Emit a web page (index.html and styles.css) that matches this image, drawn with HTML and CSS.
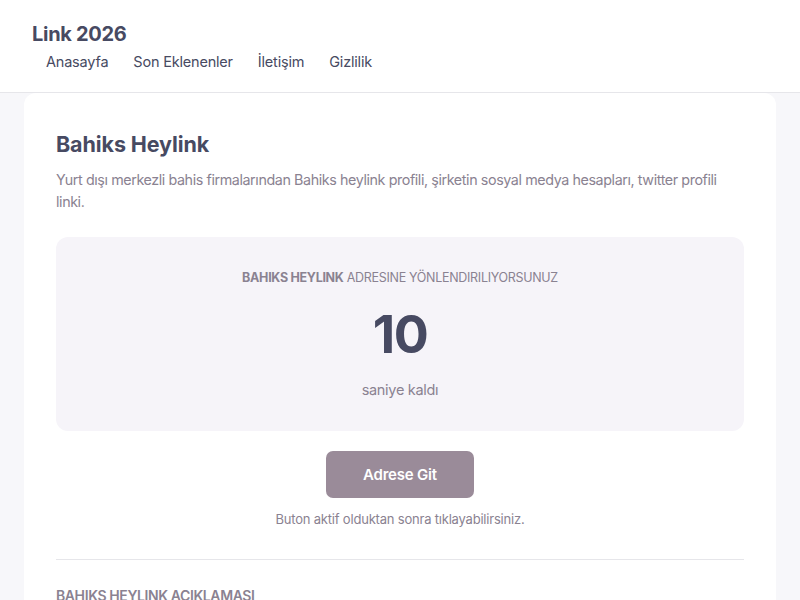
FILE: index.html
```html
<!DOCTYPE html>
<html lang="tr">
<head>
<meta charset="utf-8">
<title>Bahiks Heylink - Link 2026</title>
<link rel="stylesheet" href="styles.css">
</head>
<body>
<header class="site-header">
  <div class="brand">Link 2026</div>
  <nav class="nav">
    <a href="#">Anasayfa</a>
    <a href="#">Son Eklenenler</a>
    <a href="#">İletişim</a>
    <a href="#">Gizlilik</a>
  </nav>
</header>
<main class="page">
  <article class="card">
    <h1 class="title">Bahiks Heylink</h1>
    <p class="desc">Yurt dışı merkezli bahis firmalarından Bahiks heylink profili, şirketin sosyal medya hesapları, twitter profili linki.</p>
    <section class="redirect">
      <div class="redirect-label"><strong>BAHIKS HEYLINK</strong> ADRESINE YÖNLENDIRILIYORSUNUZ</div>
      <div class="count">10</div>
      <div class="count-sub">saniye kaldı</div>
    </section>
    <div class="action">
      <button class="go-btn" type="button">Adrese Git</button>
      <p class="hint">Buton aktif olduktan sonra tıklayabilirsiniz.</p>
    </div>
    <hr class="divider">
    <h2 class="section-title">BAHIKS HEYLINK AÇIKLAMASI</h2>
  </article>
</main>
</body>
</html>
```
FILE: styles.css
```css
* { box-sizing: border-box; }
html, body { margin: 0; padding: 0; }
body {
  background: #f7f7fa;
  font-family: "Inter", "Noto Sans", sans-serif;
  color: #474a62;
  height: 600px;
  overflow: hidden;
}
.site-header {
  background: #ffffff;
  border-bottom: 1px solid #e6e6ea;
  padding: 20px 32px 0;
  height: 93px;
}
.brand {
  font-size: 20px;
  font-weight: 700;
  line-height: 28px;
  color: #474a62;
  letter-spacing: -0.3px;
}
.nav {
  display: flex;
  gap: 25px;
  padding-left: 14px;
  margin-top: 0px;
}
.nav a {
  font-size: 14.5px;
  line-height: 28px;
  color: #474a62;
  text-decoration: none;
  letter-spacing: -0.2px;
}
.page {
  padding: 0 24px;
}
.card {
  background: #ffffff;
  border-radius: 12px;
  padding: 32px 32px 40px;
  margin-top: 0;
}
.title {
  margin: 4px 0 0;
  font-size: 21.5px;
  line-height: 30px;
  font-weight: 700;
  color: #474a62;
  letter-spacing: -0.1px;
}
.desc {
  margin: 10px 0 0;
  font-size: 14.3px;
  line-height: 22px;
  color: #8a8291;
  letter-spacing: -0.4px;
}
.redirect {
  margin-top: 24px;
  background: #f6f4f9;
  border-radius: 12px;
  height: 194px;
  display: flex;
  flex-direction: column;
  align-items: center;
  padding-top: 32px;
}
.redirect-label {
  font-size: 12.5px;
  line-height: 18px;
  color: #8a8291;
  letter-spacing: -0.3px;
}
.redirect-label strong { font-weight: 700; }
.count {
  margin-top: 17px;
  font-size: 52px;
  line-height: 62px;
  font-weight: 700;
  color: #474a62;
  letter-spacing: -1.5px;
}
.count-sub {
  margin-top: 14px;
  font-size: 14.5px;
  line-height: 20px;
  color: #8a8291;
  letter-spacing: -0.3px;
}
.action {
  display: flex;
  flex-direction: column;
  align-items: center;
  margin-top: 20px;
}
.go-btn {
  width: 148px;
  height: 47px;
  border: none;
  border-radius: 7px;
  background: #9a8b99;
  color: #ffffff;
  font-family: inherit;
  font-size: 15px;
  font-weight: 600;
  letter-spacing: -0.2px;
}
.hint {
  margin: 12px 0 0;
  font-size: 13px;
  line-height: 18px;
  color: #8a8291;
  letter-spacing: -0.2px;
}
.divider {
  border: none;
  border-top: 1px solid #e6e6ea;
  margin: 31px 0 0;
}
.section-title {
  margin: 26px 0 0;
  font-size: 14px;
  line-height: 20px;
  font-weight: 600;
  color: #8a8291;
  letter-spacing: -0.4px;
}
```
